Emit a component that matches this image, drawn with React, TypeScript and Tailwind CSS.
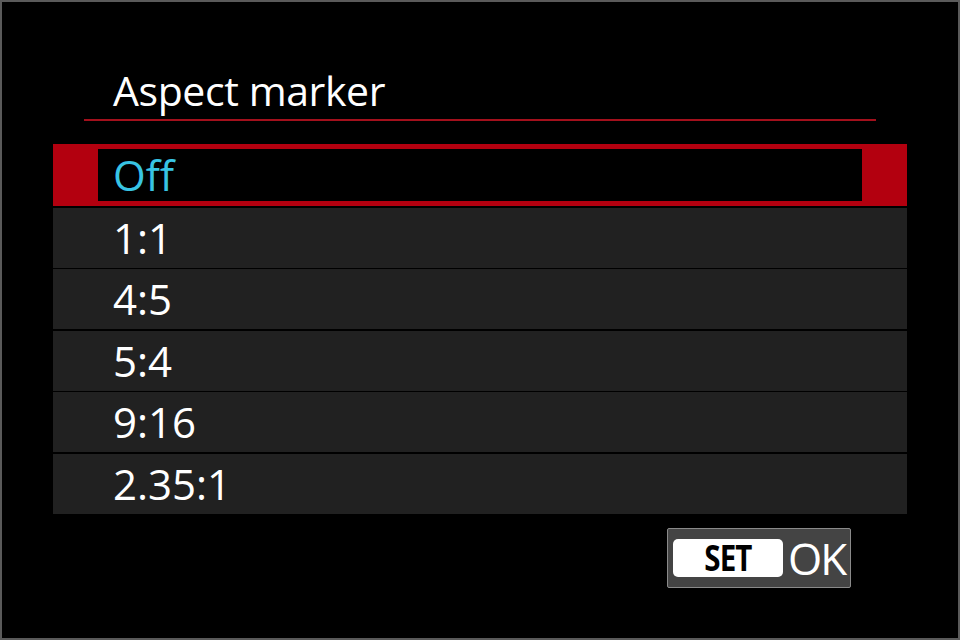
import React from 'react';

const options = ['Off', '1:1', '4:5', '5:4', '9:16', '2.35:1'];

const font = { fontFamily: '"Open Sans", "Noto Sans", sans-serif' };

function MenuRow({ label, selected }: { label: string; selected: boolean }) {
  if (selected) {
    return (
      <div className="h-[62px] bg-[#b3000f] px-[45px] py-[5px]">
        <div className="h-full bg-black flex items-center pl-[15px]">
          <span className="text-[42px] leading-[42px] text-[#38c4e4]">{label}</span>
        </div>
      </div>
    );
  }
  return (
    <div className="h-[60px] bg-[#212121] flex items-center pl-[60px]">
      <span className="text-[42px] leading-[42px] text-white">{label}</span>
    </div>
  );
}

export default function App() {
  const value = 'Off';

  return (
    <div
      className="w-[960px] h-[640px] bg-black border-2 border-[#5a5a5a] flex flex-col overflow-hidden"
      style={font}
    >
      <div className="pt-[67px] pl-[111px] h-[42px] box-content">
        <h1 className="text-[41px] leading-[42px] text-white font-normal tracking-[-0.4px]">Aspect marker</h1>
      </div>
      <div className="ml-[82px] mt-[8px] w-[792px] h-[2px] bg-[#a3101c]" />

      <div className="ml-[51px] mt-[23px] w-[854px] flex flex-col gap-[1.5px]">
        {options.map((opt) => (
          <MenuRow key={opt} label={opt} selected={opt === value} />
        ))}
      </div>

      <div className="flex justify-end pr-[107px] mt-[14px]">
        <div className="w-[184px] h-[60px] border border-[#8a8a8a] bg-[#444444] rounded-[2px] flex items-center pl-[5px]">
          <div className="w-[110px] h-[38px] bg-white rounded-[5px] flex items-center justify-center">
            <span className="text-[36px] leading-none font-bold text-black tracking-[-1px] scale-x-[0.82]">SET</span>
          </div>
          <span className="ml-[5px] text-[44px] leading-none text-white tracking-[-2px]">OK</span>
        </div>
      </div>
    </div>
  );
}
